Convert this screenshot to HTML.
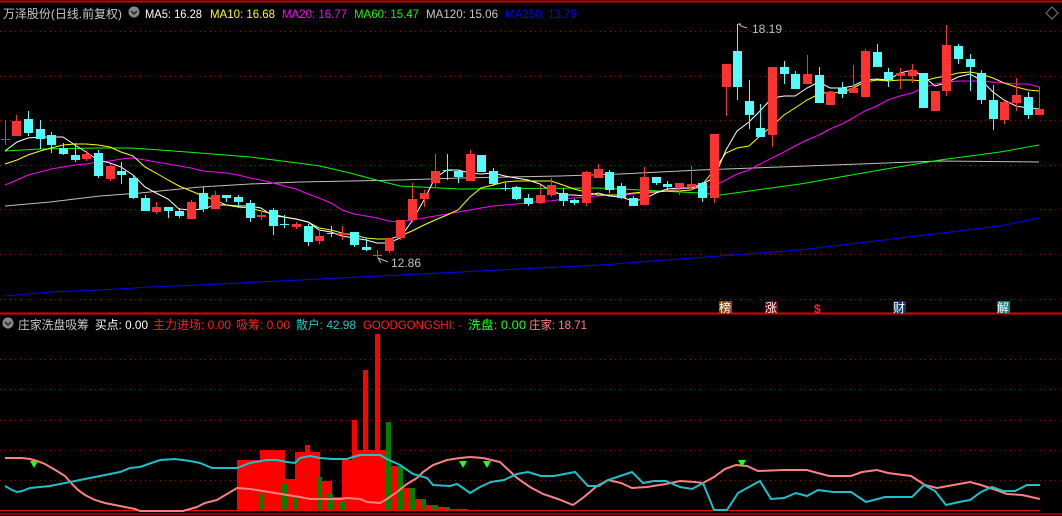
<!DOCTYPE html>
<html><head><meta charset="utf-8"><style>
html,body{margin:0;padding:0;background:#000;width:1062px;height:516px;overflow:hidden}
svg{display:block}
text{font-family:"Liberation Sans","Noto Sans CJK SC",sans-serif;font-size:12px}
</style></head><body>
<svg width="1062" height="516" viewBox="0 0 1062 516" xmlns="http://www.w3.org/2000/svg" shape-rendering="crispEdges">
<rect width="1062" height="516" fill="#000"/>
<line x1="0" y1="1.5" x2="1062" y2="1.5" stroke="#d00000" stroke-width="2"/>
<g stroke="#a00000" stroke-dasharray="1 4" stroke-width="1">
<path d="M0 31.5H1062M0 76.5H1062M0 120.5H1062M0 165.5H1062M0 209.5H1062M0 254.5H1062M0 299.5H1062"/>
<path d="M0 359.5H1062M0 389.5H1062M0 420.5H1062M0 450.5H1062M0 480.5H1062"/>
</g>
<line x1="0" y1="313.5" x2="1062" y2="313.5" stroke="#e00000" stroke-width="2"/>
<line x1="0" y1="514" x2="1062" y2="514" stroke="#900000" stroke-width="2"/>

<!-- header -->
<text x="3" y="18" fill="#c8c8c8" textLength="119" lengthAdjust="spacingAndGlyphs">万泽股份(日线.前复权)</text>
<circle cx="134" cy="12" r="5.5" fill="#888"/><path d="M131 11l3 3 3-3" stroke="#222" fill="none" stroke-width="1.5" shape-rendering="auto"/>
<text x="145" y="18" fill="#fff" textLength="57" lengthAdjust="spacingAndGlyphs">MA5: 16.28</text>
<text x="210" y="18" fill="#ffff00" textLength="65" lengthAdjust="spacingAndGlyphs">MA10: 16.68</text>
<text x="282" y="18" fill="#ff00ff" textLength="65" lengthAdjust="spacingAndGlyphs">MA20: 16.77</text>
<text x="354" y="18" fill="#00ff00" textLength="65" lengthAdjust="spacingAndGlyphs">MA60: 15.47</text>
<text x="426" y="18" fill="#c8c8c8" textLength="72" lengthAdjust="spacingAndGlyphs">MA120: 15.06</text>
<text x="505" y="18" fill="#0000ff" textLength="72" lengthAdjust="spacingAndGlyphs">MA250: 13.79</text>
<path d="M1052 7l6 6-6 6-6-6z" stroke="#777" fill="none" shape-rendering="auto"/>

<g fill="none" stroke-width="1" shape-rendering="auto">
<polyline stroke="#0000ff" points="5,296 50,292 100,290 150,287 200,285 300,280 400,275 500,270 600,265 680,259 720,256 800,250 900,238 1000,226 1039,218"/>
<polyline stroke="#c0c0c0" points="5,206 50,202 100,196 140,193 200,187 250,184 300,182 400,180 460,178 560,176 620,174 700,170 780,167 860,164 940,161 1039,162"/>
<polyline stroke="#00ff00" points="5,151 40,149 100,148 130,148 160,150 200,153 250,157 290,162 320,166 350,173 380,181 400,186 460,189 600,188 700,193 720,195 800,184 880,170 940,160 1000,152 1039,145"/>
<polyline stroke="#ff00ff" points="5,185 17,180 28,175 40,172 51,169 63,167 75,165 86,164 98,162 110,161 121,159 133,158 145,160 156,162 168,164 179,166 191,168 203,171 215,172 226,173 238,175 250,178 261,180 273,183 284,186 296,189 308,194 319,198 331,203 342,210 354,214 366,216 377,218 389,221 400,222 412,220 424,218 435,216 447,214 458,212 470,210 481,208 493,206 505,205 516,204 528,203 540,201 551,201 563,199 574,198 586,197 598,196 609,195 621,195 633,194 644,193 656,192 667,191 679,189 691,188 702,188 714,186 726,180 737,174 749,170 760,164 772,158 784,152 795,146 807,140 819,135 830,129 842,124 853,118 865,111 877,106 888,100 900,96 912,93 923,88 935,84 946,82 958,81 970,81 981,81 993,82 1004,83 1016,84 1028,84 1039,87"/>
<polyline stroke="#ffff00" points="5,164 17,160 28,155 40,151 51,148 63,145 75,144 86,144 98,145 110,147 121,152 133,156 145,167 156,173 168,180 179,186 191,191 203,196 215,200 226,205 238,207 250,208 261,211 273,214 284,217 296,219 308,222 319,228 331,230 342,233 354,235 366,238 377,239 389,239 400,236 412,231 424,225 435,220 447,215 458,210 470,197 481,188 493,185 505,182 516,181 528,181 540,181 551,181 563,185 574,189 586,192 598,195 609,195 621,195 633,193 644,192 656,192 667,191 679,191 691,190 702,185 714,170 726,153 737,148 749,146 760,136 772,126 784,115 795,108 807,100 819,94 830,92 842,93 853,88 865,82 877,80 888,81 900,80 912,80 923,81 935,78 946,76 958,73 970,72 981,74 993,78 1004,83 1016,87 1028,90 1039,91"/>
<polyline stroke="#ffffff" points="5,151 17,142 28,138 40,137 51,137 63,137 75,145 86,152 98,160 110,163 121,167 133,175 145,187 156,193 168,199 179,209 191,210 203,209 215,205 226,205 238,206 250,206 261,208 273,216 284,217 296,219 308,222 319,230 331,232 342,236 354,238 366,240 377,243 389,243 400,238 412,221 424,200 435,178 447,170 458,170 470,173 481,174 493,173 505,176 516,178 528,180 540,184 551,191 563,195 574,195 586,196 598,193 609,196 621,197 633,201 644,199 656,193 667,189 679,188 691,188 702,184 714,178 726,150 737,131 749,122 760,111 772,98 784,96 795,96 807,88 819,82 830,88 842,88 853,86 865,80 877,79 888,80 900,73 912,70 923,76 935,86 946,83 958,77 970,74 981,80 993,92 1004,100 1016,106 1028,108 1039,109"/>
</g>

<g fill="#ff3232">
<path stroke="#ff3232" fill="none" d="M5.5 120V145M16.5 115V136M86.5 150V161M110.5 164V181M156.5 202V214M191.5 200V219M215.5 191V209M261.5 210V220M296.5 222V229M319.5 227V244M342.5 226V240M377.5 250V258M389.5 238V253M400.5 220V240M412.5 183V222M424.5 190V207M435.5 154V188M470.5 150V181M540.5 185V204M551.5 178V197M586.5 171V206M598.5 164V178M644.5 167V205M679.5 183V195M691.5 166V190M714.5 134V203M726.5 64V116M772.5 67V147M807.5 55V84M830.5 92V105M853.5 65V93M865.5 49V97M900.5 68V89M912.5 64V83M935.5 91V111M946.5 25V96M1004.5 101V124M1016.5 78V111M1039.5 87V115"/>
<rect x="1" y="139" width="9" height="1"/><rect x="12" y="121" width="9" height="15"/><rect x="82" y="154" width="9" height="5"/><rect x="106" y="166" width="9" height="13"/><rect x="152" y="207" width="9" height="5"/><rect x="187" y="202" width="9" height="17"/><rect x="211" y="195" width="9" height="14"/><rect x="257" y="215" width="9" height="2"/><rect x="292" y="224" width="9" height="3"/><rect x="315" y="236" width="9" height="5"/><rect x="338" y="233" width="9" height="2"/><rect x="373" y="255" width="9" height="1"/><rect x="385" y="238" width="9" height="13"/><rect x="396" y="220" width="9" height="18"/><rect x="408" y="199" width="9" height="21"/><rect x="420" y="193" width="9" height="6"/><rect x="431" y="171" width="9" height="12"/><rect x="466" y="154" width="9" height="27"/><rect x="536" y="195" width="9" height="8"/><rect x="547" y="185" width="9" height="10"/><rect x="582" y="172" width="9" height="31"/><rect x="594" y="169" width="9" height="9"/><rect x="640" y="177" width="9" height="28"/><rect x="675" y="183" width="9" height="4"/><rect x="687" y="184" width="9" height="3"/><rect x="710" y="134" width="9" height="64"/><rect x="722" y="64" width="9" height="23"/><rect x="768" y="67" width="9" height="68"/><rect x="803" y="74" width="9" height="10"/><rect x="826" y="92" width="9" height="13"/><rect x="849" y="88" width="9" height="5"/><rect x="861" y="51" width="9" height="46"/><rect x="896" y="73" width="9" height="3"/><rect x="908" y="70" width="9" height="6"/><rect x="931" y="91" width="9" height="20"/><rect x="942" y="45" width="9" height="46"/><rect x="1000" y="102" width="9" height="18"/><rect x="1012" y="95" width="9" height="8"/><rect x="1035" y="109" width="9" height="6"/>
</g>
<g fill="#54fcfc">
<path stroke="#54fcfc" fill="none" d="M28.5 111V136M40.5 120V149M51.5 132V153M63.5 143V155M75.5 143V162M98.5 150V178M121.5 162V184M133.5 176V199M145.5 195V211M168.5 207V218M179.5 208V218M203.5 187V212M226.5 195V202M238.5 195V208M250.5 200V222M273.5 208V235M284.5 215V228M308.5 224V246M331.5 226V237M354.5 232V247M366.5 238V251M447.5 154V180M458.5 170V183M481.5 155V172M493.5 168V186M505.5 183V191M516.5 186V200M528.5 194V206M563.5 188V206M574.5 199V205M609.5 170V193M621.5 183V199M633.5 196V206M656.5 177V185M667.5 181V191M702.5 182V202M737.5 24V100M749.5 80V129M760.5 104V137M784.5 61V84M795.5 71V89M819.5 67V103M842.5 82V98M877.5 44V67M888.5 68V87M923.5 73V108M958.5 44V64M970.5 54V91M981.5 70V104M993.5 85V130M1028.5 92V119"/>
<rect x="24" y="119" width="9" height="14"/><rect x="36" y="129" width="9" height="10"/><rect x="47" y="135" width="9" height="10"/><rect x="59" y="148" width="9" height="6"/><rect x="71" y="155" width="9" height="5"/><rect x="94" y="153" width="9" height="23"/><rect x="117" y="171" width="9" height="4"/><rect x="129" y="178" width="9" height="20"/><rect x="141" y="198" width="9" height="13"/><rect x="164" y="207" width="9" height="4"/><rect x="175" y="211" width="9" height="5"/><rect x="199" y="193" width="9" height="16"/><rect x="222" y="195" width="9" height="3"/><rect x="234" y="197" width="9" height="5"/><rect x="246" y="203" width="9" height="15"/><rect x="269" y="210" width="9" height="16"/><rect x="280" y="224" width="9" height="1"/><rect x="304" y="226" width="9" height="16"/><rect x="327" y="233" width="9" height="1"/><rect x="350" y="232" width="9" height="13"/><rect x="362" y="247" width="9" height="3"/><rect x="443" y="170" width="9" height="1"/><rect x="454" y="171" width="9" height="6"/><rect x="477" y="155" width="9" height="17"/><rect x="489" y="171" width="9" height="13"/><rect x="501" y="188" width="9" height="1"/><rect x="512" y="187" width="9" height="12"/><rect x="524" y="198" width="9" height="6"/><rect x="559" y="193" width="9" height="8"/><rect x="570" y="200" width="9" height="3"/><rect x="605" y="172" width="9" height="18"/><rect x="617" y="186" width="9" height="12"/><rect x="629" y="198" width="9" height="8"/><rect x="652" y="177" width="9" height="6"/><rect x="663" y="184" width="9" height="3"/><rect x="698" y="183" width="9" height="15"/><rect x="733" y="51" width="9" height="36"/><rect x="745" y="101" width="9" height="14"/><rect x="756" y="128" width="9" height="9"/><rect x="780" y="67" width="9" height="7"/><rect x="791" y="74" width="9" height="15"/><rect x="815" y="75" width="9" height="28"/><rect x="838" y="88" width="9" height="6"/><rect x="873" y="52" width="9" height="15"/><rect x="884" y="72" width="9" height="8"/><rect x="919" y="73" width="9" height="35"/><rect x="954" y="46" width="9" height="13"/><rect x="966" y="59" width="9" height="8"/><rect x="977" y="73" width="9" height="27"/><rect x="989" y="100" width="9" height="19"/><rect x="1024" y="97" width="9" height="18"/>
</g>

<path d="M738 24h3M739 24l2 2 6 2" stroke="#c0c0c0" fill="none" shape-rendering="auto"/>
<text x="752" y="33" fill="#c0c0c0">18.19</text>
<path d="M378 258l3 5M378 258l10 4" stroke="#c0c0c0" fill="none" shape-rendering="auto"/>
<text x="391" y="267" fill="#c0c0c0">12.86</text>

<rect x="719" y="301" width="13" height="12" fill="#8b4a10"/><text x="719" y="312" fill="#fff">榜</text>
<rect x="765" y="301" width="13" height="12" fill="#7a0000"/><text x="765" y="312" fill="#fff">涨</text>
<text x="814" y="313" fill="#ff2020" style="font-weight:bold">$</text>
<rect x="893" y="301" width="13" height="12" fill="#0a3a6a"/><text x="893" y="312" fill="#fff">财</text>
<rect x="997" y="301" width="13" height="12" fill="#0a7a78"/><text x="997" y="312" fill="#fff">解</text>

<!-- lower header -->
<circle cx="8" cy="323" r="5.5" fill="#888"/><path d="M5 322l3 3 3-3" stroke="#222" fill="none" stroke-width="1.5" shape-rendering="auto"/>
<text x="18" y="329" fill="#c8c8c8" textLength="71" lengthAdjust="spacingAndGlyphs">庄家洗盘吸筹</text>
<text x="95" y="329" fill="#fff" textLength="53" lengthAdjust="spacingAndGlyphs">买点: 0.00</text>
<text x="153" y="329" fill="#ff2020" textLength="78" lengthAdjust="spacingAndGlyphs">主力进场: 0.00</text>
<text x="236" y="329" fill="#ff2020" textLength="54" lengthAdjust="spacingAndGlyphs">吸筹: 0.00</text>
<text x="296" y="329" fill="#20c8c8" textLength="60" lengthAdjust="spacingAndGlyphs">散户: 42.98</text>
<text x="363" y="329" fill="#ff2020" textLength="99" lengthAdjust="spacingAndGlyphs">GOODGONGSHI: -</text>
<text x="468" y="329" fill="#20ff20" textLength="58" lengthAdjust="spacingAndGlyphs">洗盘: 0.00</text>
<text x="529" y="329" fill="#ff8080" textLength="58" lengthAdjust="spacingAndGlyphs">庄家: 18.71</text>

<g fill="#ff0000">
<rect x="237" y="460" width="23" height="51"/><rect x="260" y="450" width="25" height="61"/><rect x="285" y="479" width="10" height="32"/><rect x="295" y="452" width="10" height="59"/><rect x="305" y="445" width="5" height="66"/><rect x="310" y="452" width="10" height="59"/><rect x="320" y="481" width="12" height="30"/><rect x="332" y="497" width="10" height="14"/><rect x="342" y="460" width="10" height="51"/><rect x="352" y="420" width="5" height="91"/><rect x="357" y="450" width="6" height="61"/><rect x="363" y="370" width="5" height="141"/><rect x="368" y="450" width="7" height="61"/><rect x="375" y="334" width="5" height="177"/><rect x="380" y="450" width="6" height="61"/><rect x="391" y="466" width="7" height="45"/><rect x="403" y="488" width="7" height="23"/><rect x="415" y="499" width="7" height="12"/><rect x="426" y="505" width="7" height="6"/><rect x="438" y="507" width="7" height="4"/><rect x="450" y="509" width="17" height="2"/>
</g>
<g fill="#008000">
<rect x="259" y="493" width="4" height="18"/><rect x="282" y="484" width="5" height="27"/><rect x="293" y="497" width="5" height="14"/><rect x="317" y="477" width="5" height="34"/><rect x="328" y="494" width="5" height="17"/><rect x="340" y="502" width="5" height="9"/><rect x="386" y="422" width="5" height="89"/><rect x="398" y="466" width="5" height="45"/><rect x="409" y="488" width="6" height="23"/><rect x="421" y="499" width="5" height="12"/><rect x="432" y="505" width="6" height="6"/><rect x="445" y="507" width="5" height="4"/><rect x="456" y="509" width="5" height="2"/>
</g>
<line x1="0" y1="510.5" x2="1040" y2="510.5" stroke="#ff0000" stroke-width="1"/>

<g fill="none" stroke-width="2" shape-rendering="auto">
<polyline stroke="#ff8080" points="5,458 22,458 30,459 37,461 45,464 50,467 57,471 65,476 72,484 78,490 85,495 95,500 105,503 115,505 125,507 135,509 140,511 183,511 190,509 197,507 205,503 217,500 237,488 250,489 263,491 287,495 300,497 310,499 340,499 347,498 360,499 367,502 380,503 387,499 397,492 407,484 417,478 423,472 433,465 447,460 460,458 470,457 483,458 500,462 517,478 530,487 543,494 558,499 573,505 584,497 597,486 608,480 621,483 632,488 647,487 666,484 680,481 695,482 703,483 714,477 725,469 736,465 747,466 758,471 784,470 807,470 814,472 829,476 851,476 862,472 877,470 888,473 911,476 925,485 937,488 948,486 970,482 981,485 996,490 1007,494 1022,495 1040,499"/>
<polyline stroke="#20c0c8" points="5,486 12,490 17,492 22,491 30,488 40,487 50,486 60,484 70,482 80,480 90,478 100,476 110,474 120,472 130,468 140,467 160,460 175,459 190,461 200,463 212,468 237,468 250,463 267,460 277,460 287,462 295,463 300,458 310,456 320,458 333,459 347,459 353,457 360,455 380,455 387,459 400,465 413,474 427,478 433,485 450,486 457,484 463,488 470,493 480,487 491,482 504,480 517,474 528,472 541,476 554,476 575,472 588,486 599,486 608,480 632,472 643,483 654,481 666,481 680,487 692,489 703,483 714,510 727,510 738,493 760,481 771,499 784,498 796,493 807,496 818,490 833,492 851,492 866,502 885,497 899,497 912,497 924,485 935,491 946,505 959,502 970,500 981,492 992,487 1003,491 1015,491 1027,485 1040,485"/>
</g>
<g fill="#20ff20" shape-rendering="auto">
<path d="M30 461h8l-4 7z"/><path d="M459 461h8l-4 7z"/><path d="M483 461h8l-4 7z"/><path d="M738 460h8l-4 7z"/>
</g>
</svg>
</body></html>
